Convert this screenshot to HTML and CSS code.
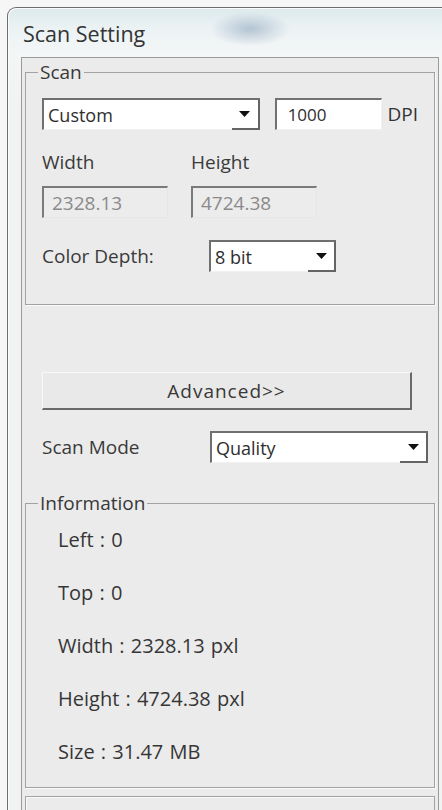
FILE: index.html
```html
<!DOCTYPE html>
<html lang="en">
<head>
<meta charset="utf-8">
<title>Scan Setting</title>
<link rel="stylesheet" href="styles.css">
</head>
<body>
<div class="window">
  <div class="titlebar">Scan Setting</div>
  <div class="panel">
    <fieldset class="group group-scan">
      <legend>Scan</legend>
      <div class="row">
        <div class="combo combo-preset">
          <span class="combo-text">Custom</span>
          <span class="combo-btn"><svg width="11" height="6" viewBox="0 0 11 6"><path d="M0 0H11L5.5 6Z" fill="#111"/></svg></span>
        </div>
        <div class="field field-dpi">1000</div>
        <span class="unit">DPI</span>
      </div>
      <div class="dims">
        <span class="label">Width</span>
        <span class="label">Height</span>
        <div class="field field-disabled">2328.13</div>
        <div class="field field-disabled">4724.38</div>
      </div>
      <div class="row row-depth">
        <span class="label label-depth">Color Depth:</span>
        <div class="combo combo-depth">
          <span class="combo-text">8 bit</span>
          <span class="combo-btn"><svg width="11" height="6" viewBox="0 0 11 6"><path d="M0 0H11L5.5 6Z" fill="#111"/></svg></span>
        </div>
      </div>
    </fieldset>

    <button class="btn-advanced" type="button">Advanced&gt;&gt;</button>

    <div class="row row-mode">
      <span class="label label-mode">Scan Mode</span>
      <div class="combo combo-mode">
        <span class="combo-text">Quality</span>
        <span class="combo-btn"><svg width="11" height="6" viewBox="0 0 11 6"><path d="M0 0H11L5.5 6Z" fill="#111"/></svg></span>
      </div>
    </div>

    <fieldset class="group group-info">
      <legend>Information</legend>
      <ul class="info-list">
        <li>Left : 0</li>
        <li>Top : 0</li>
        <li>Width : 2328.13 pxl</li>
        <li>Height : 4724.38 pxl</li>
        <li>Size : 31.47 MB</li>
      </ul>
    </fieldset>

    <div class="footer-box"></div>
  </div>
</div>
</body>
</html>
```

FILE: styles.css
```css
html, body {
  margin: 0;
  padding: 0;
  overflow: hidden;
}

body {
  width: 442px;
  height: 810px;
  background: #f6f6f6;
  font-family: "Open Sans", "Noto Sans", "DejaVu Sans", sans-serif;
  color: #383838;
}

.window {
  margin: 7px 0 0 7px;
  width: 450px;
  height: 820px;
  box-sizing: border-box;
  padding-left: 13px;
  border-left: 1px solid #6e6e6e;
  border-top: 1px solid #6e6e6e;
  border-top-left-radius: 9px;
  background:
    linear-gradient(180deg, #dde9ec 0px, #ecf3f5 22px, #f4f6f6 48px, #f1f2f2 100px, #f1f2f2 100%);
  box-shadow: inset 1px 1px 0 #fbfbfb;
}

.titlebar {
  height: 49px;
  box-sizing: border-box;
  padding: 12px 0 0 2px;
  font-size: 21.5px;
  line-height: 28px;
  color: #333;
  background:
    radial-gradient(ellipse 40px 17px at 229px 21px, rgba(125, 150, 178, 0.5), rgba(125, 150, 178, 0) 100%);
}

.panel {
  width: 418px;
  min-height: 770px;
  box-sizing: border-box;
  border: 1px solid #9a9a9a;
  border-bottom: none;
  background: #ebebeb;
  display: flex;
  flex-direction: column;
  align-items: flex-start;
}

.group {
  align-self: stretch;
  margin: 4px 3px 0;
  padding: 16px 16px 32px;
  border: 1px solid #a2a2a2;
  box-shadow: 1px 1px 0 #fafafa;
  min-width: 0;
}

.group legend {
  margin-left: -4px;
  padding: 0 2px;
  font-size: 19px;
  line-height: 20px;
  color: #383838;
}

.row {
  display: flex;
  align-items: center;
}

.label {
  font-size: 19px;
  line-height: 22px;
  color: #3a3a3a;
}

.combo {
  display: flex;
  align-items: stretch;
  height: 32px;
  box-sizing: border-box;
  background: #fff;
  border-top: 2px solid #6f6f6f;
  border-left: 2px solid #6f6f6f;
  border-bottom: 1px solid #f2f2f2;
}

.combo-text {
  flex: 1;
  display: flex;
  align-items: center;
  padding-left: 4px;
  font-size: 18px;
  color: #2e2e2e;
}

.combo-btn {
  width: 26px;
  display: flex;
  align-items: center;
  justify-content: center;
  border-right: 2px solid #646464;
  border-bottom: 2px solid #646464;
  margin-bottom: -1px;
}

.combo-preset {
  width: 218px;
}

.field {
  height: 32px;
  box-sizing: border-box;
  display: flex;
  align-items: center;
  padding-left: 11px;
  background: #fff;
  border-top: 2px solid #727272;
  border-left: 2px solid #727272;
  border-right: 1px solid #f0f0f0;
  border-bottom: 1px solid #f0f0f0;
  font-size: 17px;
  color: #2e2e2e;
}

.field-dpi {
  width: 108px;
  margin-left: 15px;
}

.unit {
  margin-left: 5px;
  font-size: 19px;
  color: #333;
}

.dims {
  display: grid;
  grid-template-columns: 126px 126px;
  column-gap: 23px;
  row-gap: 13px;
  margin-top: 21px;
}

.field-disabled {
  background: #ececec;
  color: #8a8a8a;
  padding-left: 8px;
  border-top-color: #7a7a7a;
  border-left-color: #7a7a7a;
  border-right-color: #e6e6e6;
  border-bottom-color: #e6e6e6;
  font-size: 19px;
}

.row-depth {
  margin-top: 22px;
}

.label-depth {
  width: 167px;
}

.combo-depth {
  width: 127px;
}

.btn-advanced {
  margin: 67px 0 0 20px;
  width: 370px;
  height: 38px;
  box-sizing: border-box;
  padding: 0;
  background: #e9e9e9;
  border-top: 1px solid #f8f8f8;
  border-left: 1px solid #f8f8f8;
  border-right: 2px solid #6a6a6a;
  border-bottom: 2px solid #6a6a6a;
  font-family: "Open Sans", "Noto Sans", "DejaVu Sans", sans-serif;
  font-size: 19px;
  letter-spacing: 1px;
  color: #383838;
}

.row-mode {
  margin: 21px 0 0 20px;
}

.label-mode {
  width: 168px;
}

.combo-mode {
  width: 218px;
}

.group-info {
  margin-top: 30px;
  padding: 15px 16px 23px 32px;
}

.group-info legend {
  margin-left: -20px;
}

.info-list {
  list-style: none;
  margin: 0;
  padding: 0;
  display: flex;
  flex-direction: column;
  gap: 29px;
}

.info-list li {
  font-size: 20px;
  line-height: 24px;
  word-spacing: 1px;
  color: #363636;
}

.footer-box {
  align-self: stretch;
  margin: 8px 3px 0;
  height: 40px;
  border: 1px solid #a2a2a2;
  border-bottom: none;
  box-shadow: inset 1px 1px 0 #fafafa;
}
```
